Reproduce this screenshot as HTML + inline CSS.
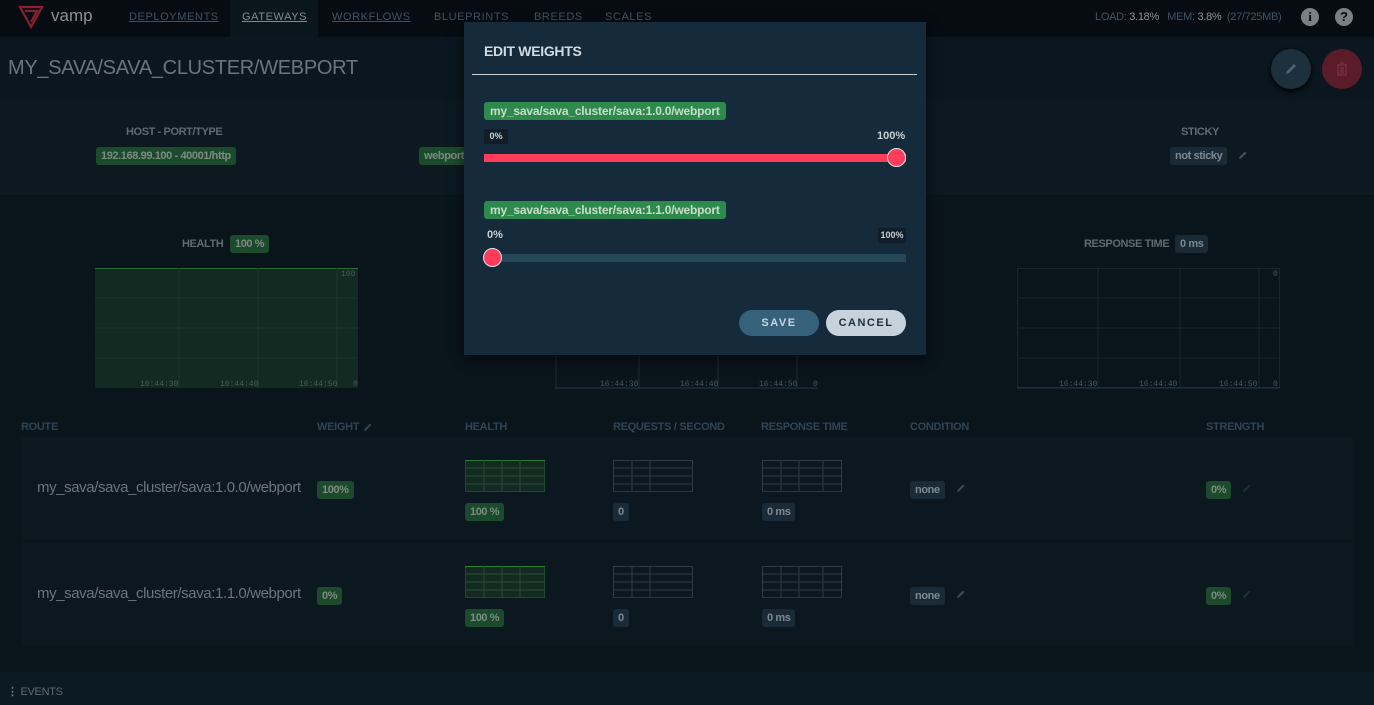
<!DOCTYPE html>
<html><head><meta charset="utf-8"><style>
*{box-sizing:border-box;margin:0;padding:0}
body{width:1374px;height:705px;overflow:hidden;background:#0a141b;font-family:"Liberation Sans",sans-serif;color:#6e7a82;position:relative}
.abs{position:absolute}
.nav{left:0;top:0;width:1374px;height:37px;background:#060c11}
.nav a{position:absolute;top:11px;font-size:11px;letter-spacing:.6px;color:#3e5264;text-decoration:underline}
.tag{position:absolute;font-weight:bold;font-size:11px;padding:3px 5px;border-radius:3px;line-height:12px;letter-spacing:-0.4px;white-space:nowrap}
.g{background:#1b4a2c;color:#7c8c80}
.d{background:#1a2b38;color:#7e8890}
.lbl{position:absolute;font-size:11px;font-weight:bold;color:#5f6a72;letter-spacing:-0.4px;white-space:nowrap}
.th{position:absolute;top:421px;font-size:11px;font-weight:bold;color:#2f4556;letter-spacing:-0.3px}
.row{position:absolute;left:21px;width:1332px;height:103px;background:#0c1820}
.rt{position:absolute;left:37px;font-size:15px;color:#6a757c;letter-spacing:-0.4px}
.pen{position:absolute;width:10px;height:10px}
</style></head><body>
<div class="abs nav"></div>
<div class="abs" style="left:230px;top:0;width:88px;height:37px;background:#0b151c"></div>
<svg class="abs" style="left:18px;top:5px" width="26" height="24" viewBox="0 0 26 24"><path d="M2 2 L24 2 L13 22 Z M7 6 L19 6 L13 17" fill="none" stroke="#8a1f2e" stroke-width="2.2"/></svg>
<div class="abs" style="left:51px;top:6px;font-size:17px;color:#8a9096">vamp</div>
<div class="nav"><a style="left:129px">DEPLOYMENTS</a><a style="left:242px;color:#7d8b96">GATEWAYS</a><a style="left:332px">WORKFLOWS</a><a style="left:434px;text-decoration:none">BLUEPRINTS</a><a style="left:534px;text-decoration:none">BREEDS</a><a style="left:605px;text-decoration:none">SCALES</a></div>
<div class="abs" style="left:1095px;top:11px;font-size:11px;letter-spacing:-0.3px;color:#3e5264;white-space:nowrap">LOAD: <span style="color:#8a949c">3.18%</span> &nbsp; MEM: <span style="color:#8a949c">3.8%</span> &nbsp;(27/725MB)</div>
<div class="abs" style="left:1301px;top:8px;width:18px;height:18px;border-radius:50%;background:#7a8088;color:#060c11;font-weight:bold;font-size:13px;text-align:center;line-height:18px;font-family:'Liberation Serif',serif">i</div>
<div class="abs" style="left:1335px;top:8px;width:18px;height:18px;border-radius:50%;background:#7a8088;color:#060c11;font-weight:bold;font-size:13px;text-align:center;line-height:18px">?</div>

<div class="abs" style="left:0;top:37px;width:1374px;height:63px;background:#0b161e"></div>
<div class="abs" style="left:8px;top:57px;font-size:20px;letter-spacing:-0.3px;color:#6a757d">MY_SAVA/SAVA_CLUSTER/WEBPORT</div>
<div class="abs" style="left:1271px;top:49px;width:40px;height:40px;border-radius:50%;background:#1c303e;box-shadow:0 2px 6px #000"></div>
<svg class="abs" style="left:1284px;top:62px" width="14" height="14" viewBox="0 0 14 14"><path d="M2 12 L3 9 L10 2 L12 4 L5 11 Z" fill="#4e6272"/></svg>
<div class="abs" style="left:1322px;top:49px;width:40px;height:40px;border-radius:50%;background:#5a1c28"></div>
<svg class="abs" style="left:1335px;top:61px" width="14" height="16" viewBox="0 0 14 16"><path d="M2 4h10M5 2h4M3 4v10h8V4M6 6v7M8 6v7" fill="none" stroke="#7a3040" stroke-width="1.3"/></svg>

<div class="abs" style="left:0;top:100px;width:1374px;height:95px;background:#0c1920"></div>
<div class="lbl" style="left:126px;top:126px">HOST - PORT/TYPE</div>
<div class="tag g" style="left:96px;top:147px">192.168.99.100 - 40001/http</div>
<div class="tag g" style="left:419px;top:147px">webport</div>
<div class="lbl" style="left:1181px;top:126px">STICKY</div>
<div class="tag d" style="left:1170px;top:147px">not sticky</div>
<svg class="pen" style="left:1238px;top:150px" viewBox="0 0 10 10"><path d="M1 9 L1.5 7 L7 1.5 L8.5 3 L3 8.5 Z" fill="#3e5060"/></svg>

<div class="lbl" style="left:182px;top:238px">HEALTH</div>
<div class="tag g" style="left:230px;top:235px">100 %</div>
<svg class="abs" style="left:95px;top:268px" width="264" height="121">
<rect x="0" y="0" width="263" height="120" fill="#112a22"/>
<line x1="0" y1="0.5" x2="263" y2="0.5" stroke="#2a6a35"/>
<g stroke="#1c3a2c"><line x1="84" y1="0" x2="84" y2="120"/><line x1="163" y1="0" x2="163" y2="120"/><line x1="242" y1="0" x2="242" y2="120"/><line x1="0" y1="30" x2="263" y2="30"/><line x1="0" y1="60" x2="263" y2="60"/><line x1="0" y1="90" x2="263" y2="90"/></g>
<g fill="#4a5a55" font-size="8" font-family="Liberation Mono,monospace"><text x="246" y="8">100</text><text x="45" y="118">16:44:30</text><text x="125" y="118">16:44:40</text><text x="204" y="118">16:44:50</text><text x="258" y="118">0</text></g></svg>

<svg class="abs" style="left:555px;top:355px" width="264" height="34"><g stroke="#1a2c38"><line x1="1" y1="0" x2="1" y2="33"/><line x1="84" y1="0" x2="84" y2="33"/><line x1="163" y1="0" x2="163" y2="33"/><line x1="242" y1="0" x2="242" y2="33"/></g><line x1="0" y1="33" x2="263" y2="33" stroke="#1d3a50"/>
<g fill="#4a5560" font-size="8" font-family="Liberation Mono,monospace"><text x="45" y="31">16:44:30</text><text x="125" y="31">16:44:40</text><text x="204" y="31">16:44:50</text><text x="258" y="31">0</text></g></svg>

<div class="lbl" style="left:1084px;top:238px">RESPONSE TIME</div>
<div class="tag d" style="left:1175px;top:235px">0 ms</div>
<svg class="abs" style="left:1017px;top:268px" width="264" height="121">
<g stroke="#172630"><rect x="0.5" y="0.5" width="262" height="119" fill="none"/><line x1="81" y1="0" x2="81" y2="120"/><line x1="163" y1="0" x2="163" y2="120"/><line x1="242" y1="0" x2="242" y2="120"/><line x1="0" y1="30" x2="263" y2="30"/><line x1="0" y1="60" x2="263" y2="60"/><line x1="0" y1="90" x2="263" y2="90"/></g>
<line x1="0" y1="120" x2="263" y2="120" stroke="#1d3a50"/>
<g fill="#4a5560" font-size="8" font-family="Liberation Mono,monospace"><text x="256" y="8">0</text><text x="42" y="118">16:44:30</text><text x="122" y="118">16:44:40</text><text x="202" y="118">16:44:50</text><text x="256" y="118">0</text></g></svg>

<div class="th" style="left:21px">ROUTE</div>
<div class="th" style="left:317px">WEIGHT</div>
<svg class="pen" style="left:363px;top:422px" viewBox="0 0 10 10"><path d="M1 9 L1.5 7 L7 1.5 L8.5 3 L3 8.5 Z" fill="#2f4556"/></svg>
<div class="th" style="left:465px">HEALTH</div>
<div class="th" style="left:613px">REQUESTS / SECOND</div>
<div class="th" style="left:761px">RESPONSE TIME</div>
<div class="th" style="left:910px">CONDITION</div>
<div class="th" style="left:1206px">STRENGTH</div>

<div class="row" style="top:437px"></div>
<div class="row" style="top:543px"></div>

<div class="rt" style="top:479px">my_sava/sava_cluster/sava:1.0.0/webport</div>
<div class="rt" style="top:585px">my_sava/sava_cluster/sava:1.1.0/webport</div>
<div class="tag g" style="left:317px;top:481px">100%</div>
<div class="tag g" style="left:317px;top:587px">0%</div>

<svg class="abs" style="left:465px;top:460px" width="80" height="33"><rect x="0.5" y="0.5" width="79" height="31" fill="#122a20" stroke="#1e4a2c"/><line x1="0" y1="0.5" x2="80" y2="0.5" stroke="#2a7a38"/><g stroke="#2a4a38"><line x1="19" y1="0" x2="19" y2="32"/><line x1="37" y1="0" x2="37" y2="32"/><line x1="55" y1="0" x2="55" y2="32"/><line x1="0" y1="8" x2="80" y2="8"/><line x1="0" y1="16" x2="80" y2="16"/><line x1="0" y1="24" x2="80" y2="24"/></g></svg>
<svg class="abs" style="left:465px;top:566px" width="80" height="33"><rect x="0.5" y="0.5" width="79" height="31" fill="#122a20" stroke="#1e4a2c"/><line x1="0" y1="0.5" x2="80" y2="0.5" stroke="#2a7a38"/><g stroke="#2a4a38"><line x1="19" y1="0" x2="19" y2="32"/><line x1="37" y1="0" x2="37" y2="32"/><line x1="55" y1="0" x2="55" y2="32"/><line x1="0" y1="8" x2="80" y2="8"/><line x1="0" y1="16" x2="80" y2="16"/><line x1="0" y1="24" x2="80" y2="24"/></g></svg>
<div class="tag g" style="left:465px;top:503px">100 %</div>
<div class="tag g" style="left:465px;top:609px">100 %</div>

<svg class="abs" style="left:613px;top:460px" width="80" height="33"><rect x="0.5" y="0.5" width="79" height="31" fill="none" stroke="#333a40"/><g stroke="#333a40"><line x1="19" y1="0" x2="19" y2="32"/><line x1="37" y1="0" x2="37" y2="32"/><line x1="0" y1="8" x2="80" y2="8"/><line x1="0" y1="16" x2="80" y2="16"/><line x1="0" y1="24" x2="80" y2="24"/></g><line x1="0" y1="31.5" x2="80" y2="31.5" stroke="#1d3a50"/></svg>
<svg class="abs" style="left:613px;top:566px" width="80" height="33"><rect x="0.5" y="0.5" width="79" height="31" fill="none" stroke="#333a40"/><g stroke="#333a40"><line x1="19" y1="0" x2="19" y2="32"/><line x1="37" y1="0" x2="37" y2="32"/><line x1="0" y1="8" x2="80" y2="8"/><line x1="0" y1="16" x2="80" y2="16"/><line x1="0" y1="24" x2="80" y2="24"/></g><line x1="0" y1="31.5" x2="80" y2="31.5" stroke="#1d3a50"/></svg>
<div class="tag d" style="left:613px;top:503px">0</div>
<div class="tag d" style="left:613px;top:609px">0</div>

<svg class="abs" style="left:762px;top:460px" width="80" height="33"><rect x="0.5" y="0.5" width="79" height="31" fill="none" stroke="#333a40"/><g stroke="#333a40"><line x1="19" y1="0" x2="19" y2="32"/><line x1="37" y1="0" x2="37" y2="32"/><line x1="61" y1="0" x2="61" y2="32"/><line x1="0" y1="8" x2="80" y2="8"/><line x1="0" y1="16" x2="80" y2="16"/><line x1="0" y1="24" x2="80" y2="24"/></g><line x1="0" y1="31.5" x2="80" y2="31.5" stroke="#1d3a50"/></svg>
<svg class="abs" style="left:762px;top:566px" width="80" height="33"><rect x="0.5" y="0.5" width="79" height="31" fill="none" stroke="#333a40"/><g stroke="#333a40"><line x1="19" y1="0" x2="19" y2="32"/><line x1="37" y1="0" x2="37" y2="32"/><line x1="61" y1="0" x2="61" y2="32"/><line x1="0" y1="8" x2="80" y2="8"/><line x1="0" y1="16" x2="80" y2="16"/><line x1="0" y1="24" x2="80" y2="24"/></g><line x1="0" y1="31.5" x2="80" y2="31.5" stroke="#1d3a50"/></svg>
<div class="tag d" style="left:762px;top:503px">0 ms</div>
<div class="tag d" style="left:762px;top:609px">0 ms</div>

<div class="tag d" style="left:910px;top:481px">none</div>
<div class="tag d" style="left:910px;top:587px">none</div>
<svg class="pen" style="left:956px;top:483px" viewBox="0 0 10 10"><path d="M1 9 L1.5 7 L7 1.5 L8.5 3 L3 8.5 Z" fill="#3a4a58"/></svg>
<svg class="pen" style="left:956px;top:589px" viewBox="0 0 10 10"><path d="M1 9 L1.5 7 L7 1.5 L8.5 3 L3 8.5 Z" fill="#3a4a58"/></svg>
<div class="tag g" style="left:1206px;top:481px">0%</div>
<div class="tag g" style="left:1206px;top:587px">0%</div>
<svg class="pen" style="left:1242px;top:483px" viewBox="0 0 10 10"><path d="M1 9 L1.5 7 L7 1.5 L8.5 3 L3 8.5 Z" fill="#1e2e3a"/></svg>
<svg class="pen" style="left:1242px;top:589px" viewBox="0 0 10 10"><path d="M1 9 L1.5 7 L7 1.5 L8.5 3 L3 8.5 Z" fill="#1e2e3a"/></svg>

<div class="abs" style="left:0;top:672px;width:1374px;height:33px;background:#0c1a22"></div>
<div class="abs" style="left:7px;top:685px;font-size:11px;letter-spacing:-0.3px;color:#5f6a72"><b style="color:#6a757c">⋮</b> EVENTS</div>

<!-- modal -->
<div class="abs" style="left:464px;top:22px;width:462px;height:333px;background:#152a3a;box-shadow:0 4px 12px rgba(0,0,0,.6)"></div>
<div class="abs" style="left:484px;top:43px;font-size:14px;font-weight:bold;letter-spacing:-0.3px;color:#d2dbe2">EDIT WEIGHTS</div>
<div class="abs" style="left:472px;top:74px;width:445px;height:1px;background:#c8d0d6"></div>
<div class="tag" style="left:484px;top:102px;background:#2e8a4c;color:#c8dccc;font-size:12px;letter-spacing:-0.2px;padding:3px 6px">my_sava/sava_cluster/sava:1.0.0/webport</div>
<div class="abs" style="left:484px;top:129px;width:24px;height:15px;background:#0f1e28;color:#c8d0d6;font-size:9px;font-weight:bold;text-align:center;line-height:15px">0%</div>
<div class="abs" style="left:877px;top:130px;color:#c8d0d6;font-size:11px;font-weight:bold">100%</div>
<div class="abs" style="left:484px;top:154px;width:422px;height:8px;background:#ff3d5b"></div>
<div class="abs" style="left:887px;top:148px;width:19px;height:19px;border-radius:50%;background:#ff3d5b;border:1px solid #e6e6e6"></div>
<div class="tag" style="left:484px;top:201px;background:#2e8a4c;color:#c8dccc;font-size:12px;letter-spacing:-0.2px;padding:3px 6px">my_sava/sava_cluster/sava:1.1.0/webport</div>
<div class="abs" style="left:487px;top:229px;color:#c8d0d6;font-size:11px;font-weight:bold">0%</div>
<div class="abs" style="left:878px;top:228px;width:28px;height:15px;background:#0f1e28;color:#c8d0d6;font-size:9px;font-weight:bold;text-align:center;line-height:15px">100%</div>
<div class="abs" style="left:484px;top:254px;width:422px;height:8px;background:#234859"></div>
<div class="abs" style="left:483px;top:248px;width:19px;height:19px;border-radius:50%;background:#ff3d5b;border:1px solid #e6e6e6"></div>
<div class="abs" style="left:739px;top:310px;width:80px;height:26px;border-radius:13px;background:#36617a;color:#c8d6e0;font-size:11px;font-weight:bold;letter-spacing:1.5px;text-align:center;line-height:26px">SAVE</div>
<div class="abs" style="left:826px;top:310px;width:80px;height:26px;border-radius:13px;background:#c6d3dd;color:#1c2e3c;font-size:11px;font-weight:bold;letter-spacing:1.5px;text-align:center;line-height:26px">CANCEL</div>
</body></html>
